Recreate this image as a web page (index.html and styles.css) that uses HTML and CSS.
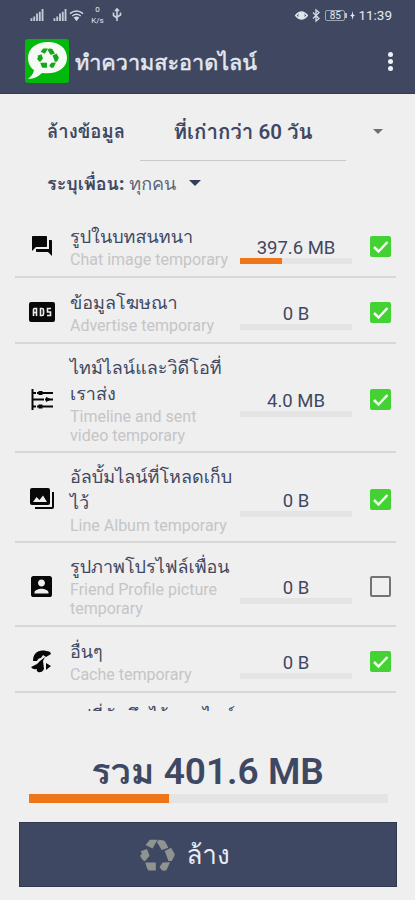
FILE: index.html
```html
<!DOCTYPE html>
<html lang="th">
<head>
<meta charset="utf-8">
<title>ทำความสะอาดไลน์</title>
<link rel="stylesheet" href="styles.css">
</head>
<body>
<svg class="defs" aria-hidden="true">
  <symbol id="recycle" viewBox="0 0 106 94">
    <path d="M30 1H53L38 27L17 17ZM57 1L72 3Q76 5 79 12L86 25L66 32L51 8ZM75 35L94 25L105 44Q106 49 96 65H86ZM59 83L69 70L91 69L80 93Q76 95 67 94ZM16 70H48V94H26Q21 90 16 70ZM2 36L21 29L29 49L15 66L8 62L0 49L6 43Z"/>
  </symbol>
  <symbol id="signal" viewBox="0 0 14 13">
    <path d="M0 10h2v3H0zM3 8h2v5H3zM6 5h2v8H6zM9 3h2v10H9zM12 0h2v13h-2z"/>
  </symbol>
</svg>
<header class="header">
  <div class="status">
    <div class="status-left">
      <svg class="signal"><use href="#signal"/></svg>
      <svg class="signal second"><use href="#signal"/></svg>
      <svg class="wifi" viewBox="0 0 16 13"><path d="M1 4.5Q8-1 15 4.5M3.5 7Q8 3.5 12.5 7"/><path class="fill" d="M5 8.5Q8 6.5 11 8.5L8 12.5Z"/></svg>
      <span class="speed"><span>0</span><span>K/s</span></span>
      <svg class="usb" viewBox="0 0 10 14"><path d="M5 13V1M3 3l2-2 2 2M5 10L1.5 7.5V4.5M5 9l3.5-2V4.5"/></svg>
    </div>
    <div class="status-right">
      <svg class="eye" viewBox="0 0 13 11"><path d="M.7 5.5Q6.500-1.500 12.300 5.500Q6.500 12.500.7 5.500Z"/><circle cx="6.500" cy="5.500" r="2.500"/></svg>
      <svg class="bt" viewBox="0 0 8 13"><path d="M1 3.500l6 6-3 2.500V1l3 2.500-6 6"/></svg>
      <span class="battery">85</span><i class="battery-tip"></i>
      <svg class="bolt" viewBox="0 0 5 9"><path d="M2.500 0L3.200 3.500 5 4.500 3.200 5.500 2.500 9 1.800 5.500 0 4.500 1.800 3.500Z"/></svg>
      <span class="clock">11:39</span>
    </div>
  </div>
  <div class="appbar">
    <div class="logo">
      <svg class="bubble" viewBox="0 0 44 44"><path d="M23 3C12 3 3 9 3 19c0 6 3 10 6 12-.5 4-3 6-6 9 6 0 11-3 14-6 15 2 25-5 25-15C42 9 34 3 23 3Z"/><use href="#recycle" x="12" y="9" width="22" height="20"/></svg>
    </div>
    <h1 class="title"><span>ทำความสะอาดไลน์</span></h1>
    <div class="menu"><i></i><i></i><i></i></div>
  </div>
</header>
<main class="main">
  <section class="filter-age"><b class="age-label">ล้างข้อมูล</b><b class="age-value">ที่เก่ากว่า 60 วัน</b><i class="caret grey"></i></section>
  <section class="filter-friend"><b>ระบุเพื่อน:</b><span class="everyone">ทุกคน</span><i class="caret"></i></section>
  <div class="list">
    <div class="row r1">
      <svg class="icon" viewBox="0 0 24 24"><path d="M21 6h-2v9H6v2c0 .55.45 1 1 1h11l4 4V7c0-.55-.45-1-1-1zm-4 6V3c0-.55-.45-1-1-1H3c-.55 0-1 .45-1 1v14l4-4h10c.55 0 1-.45 1-1z"/></svg>
      <div class="text"><p class="name">รูปในบทสนทนา</p><p class="desc">Chat image temporary</p></div>
      <div class="size"><span>397.6 MB</span><div class="bar"><div class="fill" style="width:37.500%"></div></div></div>
      <div class="check on"><svg viewBox="0 0 21 21"><path d="M4 11l4.500 4.500L17.500 6"/></svg></div>
    </div>
    <div class="row r2">
      <svg class="icon ads" viewBox="0 0 26 20"><rect width="26" height="20" rx="2"/><path d="M4.500 14V7.500Q4.500 6.500 5.500 6.500H7.500V14M4.500 10.500H7.500M11.500 6.500V13.500H13Q14.500 13.500 14.500 12V8Q14.500 6.500 13 6.500ZM22 6.500H18.500V10H21.500V13.500H18"/></svg>
      <div class="text"><p class="name">ข้อมูลโฆษณา</p><p class="desc">Advertise temporary</p></div>
      <div class="size"><span>0 B</span><div class="bar"></div></div>
      <div class="check on"><svg viewBox="0 0 21 21"><path d="M4 11l4.500 4.500L17.500 6"/></svg></div>
    </div>
    <div class="row r3">
      <svg class="icon timeline" viewBox="0 0 22 22"><path d="M1.500 0V21M1 4H22M1 10.500H22M1 17.500H22"/><path class="node" d="M8.500 3H10.500V5H8.500ZM16 9.500L18 10.500 16 11.500ZM8.500 16.500H10.500V18.500H8.500Z"/><path class="gap" d="M5.500 2v4M13.500 8.500v4M5.500 15.500v4"/></svg>
      <div class="text"><p class="name">ไทม์ไลน์และวิดีโอที่<br>เราส่ง</p><p class="desc">Timeline and sent<br>video temporary</p></div>
      <div class="size"><span>4.0 MB</span><div class="bar"></div></div>
      <div class="check on"><svg viewBox="0 0 21 21"><path d="M4 11l4.500 4.500L17.500 6"/></svg></div>
    </div>
    <div class="row r4">
      <svg class="icon" viewBox="0 0 24 22"><path fill-rule="evenodd" d="M2 0H18Q20 0 20 2V15Q20 17 18 17H2Q0 17 0 15V2Q0 0 2 0ZM3 14H17L13 7.500 9.500 12 6.500 9ZM22 4H24V19Q24 21 22 21H5V19H22Z"/></svg>
      <div class="text"><p class="name">อัลบั้มไลน์ที่โหลดเก็บ<br>ไว้</p><p class="desc">Line Album temporary</p></div>
      <div class="size"><span>0 B</span><div class="bar"></div></div>
      <div class="check on"><svg viewBox="0 0 21 21"><path d="M4 11l4.500 4.500L17.500 6"/></svg></div>
    </div>
    <div class="row r5">
      <svg class="icon person" viewBox="3 3 18 18"><path d="M3 5v14c0 1.100.89 2 2 2h14c1.100 0 2-.9 2-2V5c0-1.100-.9-2-2-2H5c-1.110 0-2 .9-2 2zm12 4c0 1.660-1.340 3-3 3s-3-1.340-3-3 1.340-3 3-3 3 1.340 3 3zm-9 8c0-2 4-3.100 6-3.100s6 1.100 6 3.100v1H6v-1z"/></svg>
      <div class="text"><p class="name">รูปภาพโปรไฟล์เพื่อน</p><p class="desc">Friend Profile picture<br>temporary</p></div>
      <div class="size"><span>0 B</span><div class="bar"></div></div>
      <div class="check"></div>
    </div>
    <div class="row r6">
      <svg class="icon cleaner" viewBox="0 0 22 24"><path d="M2 12C2 3 9-1 19 3L20 5 15 8 12 6 10 9Q7 9 6 12ZM0 18L6 15 9 12 14 8 12 12 13 20Q11 24 7 23 5 22 6 20 2 21 0 18ZM15 14L20 17 15 21Z"/></svg>
      <div class="text"><p class="name">อื่นๆ</p><p class="desc">Cache temporary</p></div>
      <div class="size"><span>0 B</span><div class="bar"></div></div>
      <div class="check on"><svg viewBox="0 0 21 21"><path d="M4 11l4.500 4.500L17.500 6"/></svg></div>
    </div>
    <div class="row r7"><p class="name">รูปที่บันทึกไว้นอกไลน์</p></div>
  </div>
</main>
<footer class="footer">
  <div class="total"><span class="sum">รวม</span> <span>401.6 MB</span></div>
  <div class="bar total-bar"><div class="fill" style="width:39%"></div></div>
  <button class="clean"><svg class="recycle"><use href="#recycle"/></svg><span>ล้าง</span></button>
</footer>
</body>
</html>
```
FILE: styles.css
```css
* { box-sizing: border-box; }
body { margin: 0; width: 415px; height: 900px; overflow: hidden; background: #efefef; color: #3f4862; font-family: Roboto, Loma, "Noto Sans Thai", "Noto Sans", sans-serif; }
p, h1 { margin: 0; }
svg { display: block; flex: none; overflow: visible; }
.defs { width: 0; height: 0; position: absolute; }
.header { height: 94px; background: #3f4860; border-bottom: 1px solid #343c55; color: #e4e8f3; }
.status { height: 30px; display: flex; justify-content: space-between; padding: 0 22px 0 30px; }
.status-left, .status-right { display: flex; align-items: center; }
.signal { width: 14px; height: 12px; fill: #c5cad7; }
.second { margin-left: 9px; }
.wifi { width: 15px; height: 13px; margin-left: 2px; fill: none; stroke: #d5d9e4; stroke-width: 1.500; }
.wifi .fill { fill: #d5d9e4; stroke: none; }
.speed { display: flex; flex-direction: column; align-items: center; width: 15px; margin-left: 6px; font-size: 8px; line-height: 11px; }
.usb { width: 10px; height: 14px; margin-left: 7px; fill: none; stroke: #cbd0dd; stroke-width: 1.600; }
.eye { width: 13px; height: 11px; fill: none; stroke: #e0e4ee; stroke-width: 1.500; }
.eye circle { fill: #e0e4ee; }
.bt { width: 8px; height: 13px; margin-left: 4px; fill: none; stroke: #d5d9e4; stroke-width: 1.300; }
.battery { width: 20px; height: 11px; margin-left: 5px; border: 1px solid #9ba3b6; border-radius: 2px; font-size: 10px; line-height: 9px; text-align: center; }
.battery-tip { width: 2px; height: 5px; background: #b8bfce; }
.bolt { width: 5px; height: 9px; margin: 0 3px 0 3px; fill: #e0e4ee; }
.clock { font-size: 13.500px; margin-right: 1px; }
.appbar { display: flex; align-items: center; height: 62px; padding: 0 20px 0 25px; }
.logo { width: 44px; height: 44px; background: #00b90a; border-radius: 3px; }
.bubble { width: 44px; height: 44px; fill: #f5faf5; }
.bubble use { fill: #16a51c; }
.title { margin: 4px 0 0 6px; flex: 1; font-size: 21.600px; font-weight: 500; line-height: 36px; white-space: nowrap; -webkit-text-stroke: .5px #e4e8f3; }
.menu { display: flex; flex-direction: column; gap: 2px; width: 10px; align-items: center; }
.menu i { width: 5px; height: 5px; border-radius: 50%; background: #eef1f8; }
.main { height: 618px; display: flex; flex-direction: column; overflow: hidden; }
.filter-age { height: 74px; display: flex; align-items: center; padding: 0 31px 0 47px; }
.age-label { width: 93px; font-size: 18.500px; font-weight: 600; white-space: nowrap; }
.age-value { width: 206px; height: 54px; margin-top: 5px; border-bottom: 1px solid #c9c9cd; text-align: center; font-size: 20.500px; line-height: 50px; font-weight: 600; white-space: nowrap; }
.caret { width: 0; height: 0; border: 6px solid transparent; border-bottom: 0; border-top-color: #343d58; }
.caret.grey { border-width: 5px 5px 0; border-top-color: #707070; margin-left: 27px; }
.filter-friend { height: 30px; display: flex; align-items: center; padding-left: 47px; font-size: 18px; font-weight: 600; white-space: nowrap; }
.everyone { margin-left: 5px; font-size: 18px; font-weight: 400; color: #5e6577; }
.filter-friend .caret { margin-left: 13px; }
.list { margin: 14px 19px 0 15px; }
.row { display: grid; grid-template-columns: 55px 162px 127px 22px; align-items: center; padding-top: 4px; border-bottom: 2px solid #d7d7d8; }
.r1 { height: 66px; } .r2 { height: 66px; } .r3 { height: 109px; } .r4 { height: 90px; } .r5 { height: 84px; } .r6 { height: 66px; }
.icon { width: 24px; height: 24px; margin-left: 15px; fill: #080808; }
.ads { width: 26px; height: 20px; margin-left: 14px; }
.ads path { fill: none; stroke: #eee; stroke-width: 1.600; }
.timeline { width: 22px; height: 22px; margin-left: 16px; }
.timeline path { stroke: #080808; stroke-width: 2; }
.timeline .gap { stroke: #efefef; stroke-width: 1; }
.person { width: 21px; height: 21px; margin-left: 16px; }
.cleaner { width: 22px; margin-left: 16px; }
.name { font-size: 18px; line-height: 26px; white-space: nowrap; }
.desc { font-size: 16px; line-height: 19px; color: #c5c5c7; white-space: nowrap; }
.size { width: 112px; margin-left: 8px; text-align: center; font-size: 18.500px; line-height: 21px; margin-top: 8px; }
.bar { height: 6px; background: #e4e4e5; }
.size .bar { margin-top: 0; }
.size span { position: relative; top: 1px; }
.bar .fill { height: 100%; background: #ef7519; }
.check { width: 21px; height: 21px; margin-left: 11px; border: 2px solid #737373; border-radius: 2px; }
.check.on { background: #43d133; border: 0; }
.check svg { width: 21px; height: 21px; fill: none; stroke: #f3fff1; stroke-width: 2.500; }
.r7 { display: block; border: 0; height: 18px; padding: 10px 0 0 55px; overflow: hidden; }
.footer { height: 188px; display: flex; flex-direction: column; align-items: center; }
.total { height: 82px; padding-top: 36px; font-size: 37px; line-height: 48px; font-weight: 600; white-space: nowrap; }
.sum { font-size: 36px; }
.total-bar { width: 359px; height: 9px; margin-left: 1px; }
.clean { width: 378px; height: 65px; margin: 19px 0 0; padding: 0 45px 0 0; border: 1px solid #303950; background: #3f4862; color: #e7ebf7; display: flex; align-items: center; justify-content: center; gap: 11px; font: 400 26px Roboto, Loma, "Noto Sans Thai", sans-serif; }
.recycle { width: 35px; height: 32px; fill: #8f9491; }
```
